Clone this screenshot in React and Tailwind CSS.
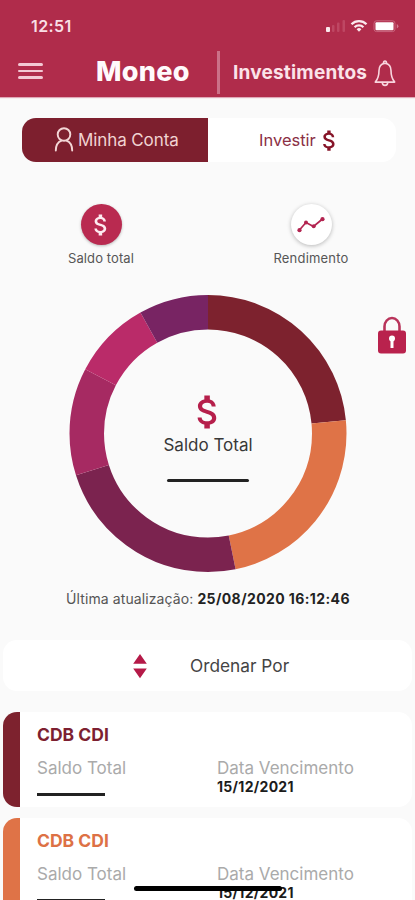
// src/App.jsx
import React from 'react';
import { MdAttachMoney } from 'react-icons/md';

const slices = [
  { color: '#7d222e', start: 0, end: 84.5 },
  { color: '#df7347', start: 84.5, end: 168.5 },
  { color: '#7b234f', start: 168.5, end: 252.4 },
  { color: '#a62a62', start: 252.4, end: 297.6 },
  { color: '#ba2b69', start: 297.6, end: 330.8 },
  { color: '#782463', start: 330.8, end: 360 },
];

const investments = [
  { name: 'CDB CDI', due: '15/12/2021', bar: 'bg-[#7d222e]', title: 'text-[#7d1f31]' },
  { name: 'CDB CDI', due: '15/12/2021', bar: 'bg-[#df7347]', title: 'text-[#dd7145]' },
];

const StatusBar = () => (
  <div className="flex h-[50px] items-start justify-between pl-[31px] pr-[15px] pt-[16px]">
    <span className="text-[16px] font-semibold leading-5 tracking-[0.4px] text-[#f9dfe6]">12:51</span>
    <svg width="76" height="16" viewBox="0 0 76 16" className="mt-[2px]">
      <rect x="2" y="9" width="4" height="5" rx="1" fill="#fbe9ee" />
      <rect x="8" y="7" width="2.5" height="7" rx="1" fill="#be4763" />
      <rect x="13" y="4.5" width="2.5" height="9.5" rx="1" fill="#be4763" />
      <rect x="18.5" y="2" width="2.5" height="12" rx="1" fill="#be4763" />
      {/* wifi */}
      <g fill="none" stroke="#fbe9ee" strokeWidth="2.3">
        <path d="M27.5 6.2a10.6 10.6 0 0 1 15 0" />
        <path d="M30.6 9.3a6.2 6.2 0 0 1 8.8 0" />
      </g>
      <path d="M32.6 11.3a3.4 3.4 0 0 1 4.8 0L35 13.8z" fill="#fbe9ee" />
      {/* battery */}
      <rect x="50" y="2.8" width="21" height="10.8" rx="2.5" fill="none" stroke="#c9647d" />
      <rect x="51.5" y="4.2" width="18" height="8" rx="1" fill="#fff" />
      <path d="M72.8 6v4.4q1.6-.8 1.6-2.2T72.8 6z" fill="#d27a90" />
    </svg>
  </div>
);

const Header = () => (
  <header className="h-[97px] shrink-0 bg-[#b02c4b] shadow-[0_1px_1px_#dfa9b7]">
    <StatusBar />
    <div className="flex h-[44px] items-center">
      <div className="ml-[18px] mt-[-2px] flex w-[25px] flex-col gap-[4px]">
        <span className="h-[2.5px] rounded-full bg-[#f3c9d4]" />
        <span className="h-[2.5px] rounded-full bg-[#f3c9d4]" />
        <span className="h-[2.5px] rounded-full bg-[#f3c9d4]" />
      </div>
      <h1 className="ml-[53px] w-[121px] whitespace-nowrap text-[27px] font-extrabold leading-8 tracking-[0.3px] text-[#fffafb]">
        Moneo
      </h1>
      <span className="h-[43px] w-[3px] bg-[#cb7188]" />
      <span className="ml-[13px] mt-[2px] w-[136px] whitespace-nowrap text-[19px] font-bold leading-6 tracking-[0.2px] text-[#fbe3e9]">
        Investimentos
      </span>
      <svg
        width="24"
        height="28"
        viewBox="0 0 24 28"
        className="ml-[4px] mt-[3px]"
        fill="none"
        stroke="#f8d5de"
        strokeWidth="1.6"
        strokeLinecap="round"
        strokeLinejoin="round"
      >
        <path d="M12 3.2C7.8 3.8 6 6.6 6 10.5c0 6-1 8.5-3.7 11.6h19.4C19 19 18 16.5 18 10.5c0-3.9-1.8-6.7-6-7.3z" />
        <path d="M10.6 3.1a1.5 1.5 0 1 1 2.8 0M9.3 22.5a2.7 2.9 0 0 0 5.4 0" />
      </svg>
    </div>
  </header>
);

const Tabs = () => (
  <div className="ml-[22px] mr-[19px] mt-[21px] flex h-[44px] shrink-0 leading-6">
    <div className="flex w-[186px] items-center rounded-l-[14px] bg-[#7d1f2e] pl-[32px] text-[17px] text-[#f1d3d2]">
      <svg
        width="20"
        height="26"
        viewBox="0 0 20 26"
        className="mt-[-3px]"
        fill="none"
        stroke="#f3d6d6"
        strokeWidth="1.9"
        strokeLinecap="round"
      >
        <circle cx="10" cy="8.5" r="6.3" />
        <path d="M1.8 24.5c0-5.2 2.6-8.7 5.7-9.9M18.2 24.5c0-5.2-2.6-8.7-5.7-9.9" />
      </svg>
      <span className="ml-[4px] whitespace-nowrap tracking-[-0.1px]">Minha Conta</span>
    </div>
    <div className="flex flex-1 items-center rounded-r-[14px] bg-white pl-[51px] text-[16.5px] text-[#8b3045]">
      <span className="w-[57px] whitespace-nowrap">Investir</span>
      <MdAttachMoney className="size-[27px] text-[#861428]" />
    </div>
  </div>
);

const Shortcuts = () => (
  <div className="mt-[42px] flex h-[65px] shrink-0 text-[13px] leading-4 text-[#565656]">
    <div className="flex w-[202px] shrink-0 flex-col items-center">
      <span className="flex size-[41px] items-center justify-center rounded-full bg-[#b92a50] shadow-[0_1px_3px_#0004]">
        <MdAttachMoney className="size-[28px] text-[#fdebf0]" />
      </span>
      <span className="mt-[5px] tracking-[0.1px]">Saldo total</span>
    </div>
    <div className="flex w-[213px] flex-col items-center pl-[5px]">
      <span className="flex size-[41px] shrink-0 items-center justify-center rounded-full bg-white shadow-[0_1px_4px_#0004]">
        <svg width="28" height="18" viewBox="0 0 28 18" fill="#b32450">
          <path d="M2 14.5L9 6.5l7.5 4L25.5 3" fill="none" stroke="#b32450" strokeWidth="1.7" />
          <circle cx="2.5" cy="14.2" r="2.1" />
          <circle cx="9" cy="6.5" r="2" />
          <circle cx="16.7" cy="10.3" r="2" />
          <circle cx="25.5" cy="3.2" r="2.1" />
        </svg>
      </span>
      <span className="mt-[5px] tracking-[0.2px]">Rendimento</span>
    </div>
  </div>
);

const BalanceChart = () => (
  <div className="ml-[69px] mt-[26px] flex h-[278px] shrink-0 items-start">
    <div className="relative size-[278px] shrink-0">
      <svg width="278" height="278" viewBox="0 0 278 278">
        <g transform="rotate(-90 139 138.5)">
          {slices.map((s) => (
            <circle
              key={s.start}
              cx="139"
              cy="138.5"
              r="121.25"
              pathLength="360"
              fill="none"
              stroke={s.color}
              strokeWidth="34.5"
              strokeDasharray={`${s.end - s.start} ${360 - s.end + s.start}`}
              strokeDashoffset={-s.start}
            />
          ))}
        </g>
      </svg>
      <div className="absolute inset-0 flex flex-col items-center">
        <MdAttachMoney className="mt-[95px] size-[44px] text-[#b61f4b]" />
        <span className="mt-[-1px] text-[17px] leading-6 text-[#383838]">Saldo Total</span>
        <span className="mt-[22px] h-[3px] w-[82px] rounded-full bg-[#222]" />
      </div>
    </div>
    <svg width="30" height="38" viewBox="0 0 30 38" className="ml-[30px] mt-[21px]">
      <path d="M7.5 18v-7.5a7.5 8.5 0 0 1 15 0V18" fill="none" stroke="#b9345b" strokeWidth="2.6" />
      <rect x="1" y="14.5" width="28" height="23" rx="3" fill="#b9224d" />
      <circle cx="15" cy="22.5" r="3" fill="#fff" />
      <path d="M13.5 23h3v9h-3z" fill="#fff" />
    </svg>
  </div>
);

const InvestmentCard = ({ item }) => (
  <div className="flex h-[95px] shrink-0 overflow-hidden rounded-[14px] bg-white">
    <span className={`w-[17px] shrink-0 ${item.bar}`} />
    <div className="ml-[17px] w-[180px] pt-[11px]">
      <p className={`text-[17.5px] font-bold leading-6 ${item.title}`}>{item.name}</p>
      <p className="mt-[9px] text-[17px] leading-6 text-[#aaa]">Saldo Total</p>
      <span className="mt-[13px] block h-[2.5px] w-[68px] bg-[#222]" />
    </div>
    <div className="whitespace-nowrap pt-[44px]">
      <p className="text-[17px] leading-6 text-[#aaa]">Data Vencimento</p>
      <p className="mt-[-2px] text-[14px] font-bold leading-[18px] tracking-[0.3px] text-[#1c1c1c]">{item.due}</p>
    </div>
  </div>
);

const App = () => {
  return (
    <div className="relative flex h-[900px] w-[415px] flex-col overflow-hidden bg-[#fafafa] font-['Inter',sans-serif]">
      <Header />
      <Tabs />
      <Shortcuts />
      <BalanceChart />

      <p className="ml-[66px] mt-[16px] whitespace-nowrap text-[14px] leading-5 tracking-[0.1px] text-[#555]">
        Última atualização: <b className="font-bold tracking-[0.4px] text-[#222]">25/08/2020 16:12:46</b>
      </p>

      {/* Sort selector */}
      <div className="mx-[3px] mt-[31px] flex h-[51px] shrink-0 items-center rounded-[14px] bg-white">
        <svg width="14" height="26" viewBox="0 0 14 26" className="ml-[130px]" fill="#b51a48">
          <path d="M7 1l6.8 9.8H.2zM7 25.2l6.8-9.8H.2z" />
        </svg>
        <span className="ml-[43px] text-[17.3px] leading-6 text-[#444]">Ordenar Por</span>
      </div>

      <div className="mx-[3px] mt-[21px] flex flex-col gap-[11px]">
        {investments.map((item, i) => (
          <InvestmentCard key={i} item={item} />
        ))}
      </div>

      {/* Home indicator */}
      <span className="absolute bottom-[9px] left-[134px] h-[5px] w-[148px] rounded-full bg-black" />
    </div>
  );
};

export default App;
